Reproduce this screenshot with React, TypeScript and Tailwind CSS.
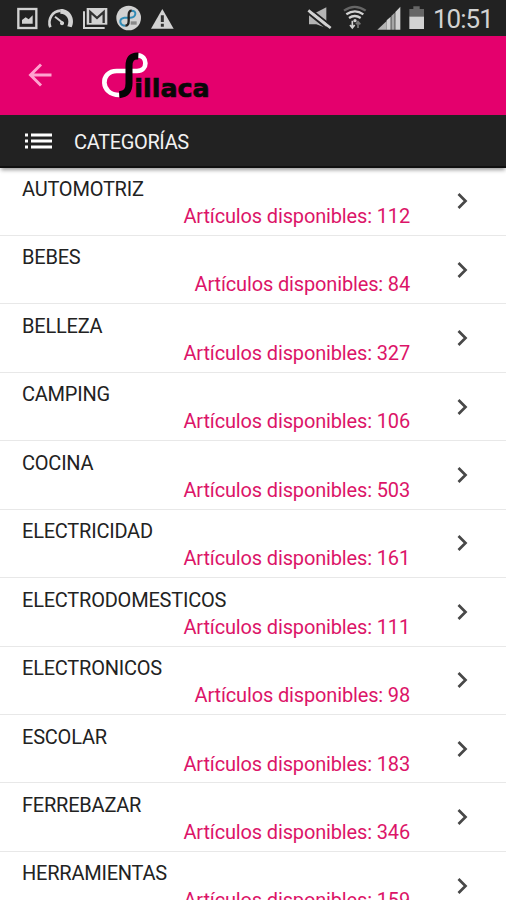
import React from 'react';

interface Category {
  name: string;
  count: number;
}

const categories: Category[] = [
  { name: 'AUTOMOTRIZ', count: 112 },
  { name: 'BEBES', count: 84 },
  { name: 'BELLEZA', count: 327 },
  { name: 'CAMPING', count: 106 },
  { name: 'COCINA', count: 503 },
  { name: 'ELECTRICIDAD', count: 161 },
  { name: 'ELECTRODOMESTICOS', count: 111 },
  { name: 'ELECTRONICOS', count: 98 },
  { name: 'ESCOLAR', count: 183 },
  { name: 'FERREBAZAR', count: 346 },
  { name: 'HERRAMIENTAS', count: 159 },
];

const StatusBar: React.FC = () => (
  <div className="flex h-9 shrink-0 items-center justify-between bg-[#222222] text-[#d2d2d2]">
    {/* Notifications */}
    <svg className="h-9 w-[180px]" viewBox="0 0 540 108" fill="none">
      <rect x="55" y="27" width="54" height="57" stroke="currentColor" strokeWidth="7" />
      <path d="M66 71V60l11-8 9 6 12-12v25z" fill="currentColor" />
      <path d="M151 82c-9-24 6-49 31-50" stroke="currentColor" strokeWidth="8" />
      <path d="M181 27c28-2 47 29 34 55l-13-3c9-21-2-38-21-38z" fill="currentColor" />
      <path d="M165 50l25 20" stroke="currentColor" strokeWidth="6" />
      <circle cx="186" cy="70" r="6" fill="currentColor" />
      <path d="M252 34v50h62" stroke="currentColor" strokeWidth="6" />
      <rect x="260" y="24" width="62" height="50" fill="currentColor" />
      <path d="M271 69V36l20 18 20-18v33" stroke="#303030" strokeWidth="7" />
      <circle cx="386" cy="54" r="37" fill="currentColor" />
      <path d="M394 32q13 0 12 10-1 10-15 11h-18q-13 2-12 13 2 11 15 11" stroke="#318bb5" strokeWidth="6" />
      <path d="M395 32q-9 0-9 14v17q0 14-10 14" stroke="#222222" strokeWidth="7" />
      <path d="M392 69h18" stroke="#888888" strokeWidth="10" />
      <path d="M487 27l34 59h-68z" fill="currentColor" />
      <path d="M487 46v20M487 71v9" stroke="#303030" strokeWidth="9" />
    </svg>
    {/* Phone state */}
    <div className="flex items-center">
      <svg className="h-9 w-[130px]" viewBox="-3 0 390 108" fill="none">
        <path d="M24 38h20l32-16v62L46 73H24z" fill="#b4b4b4" />
        <path d="M24 24l68 54M20 39l66 53" stroke="#222222" strokeWidth="6" />
        <path d="M22 31l67 53" stroke="currentColor" strokeWidth="8" />
        <path d="M129 32q32-23 65 0" stroke="#666666" strokeWidth="7" />
        <path d="M136 43q26-18 51 0M144 54q17-12 35 0" stroke="currentColor" strokeWidth="7" />
        <circle cx="162" cy="62" r="5" fill="currentColor" />
        <path d="M154 62v22M147 75l7 9 7-9" stroke="currentColor" strokeWidth="5" />
        <path d="M171 84V66M165 73l6-8 7 8" stroke="#777777" strokeWidth="5" />
        <path d="M229 89l28-26v26z" fill="#b5b5b5" />
        <path d="M257 89V61l12-11v39zM283 89V36l15-16v69z" fill="currentColor" />
        <path d="M271 89V48l10-10v51z" fill="#a6a6a6" />
        <path d="M325 51V27h12v-8h19v8h13v24z" fill="#666666" />
        <path d="M325 50h44v37h-44z" fill="currentColor" />
      </svg>
      <span className="w-[76px] pt-[2px] pl-[3px] text-[26px] leading-none tracking-[-1px]">10:51</span>
    </div>
  </div>
);

const Logo: React.FC = () => (
  <svg className="h-[70px] w-[130px]" viewBox="0 0 390 210" fill="none">
    <path
      d="M144 46c28 1 32 46-3 47H80c-50 0-51 71 8 72"
      stroke="#ffffff"
      strokeWidth="14"
    />
    <path d="M145 48c-21-1-28 10-28 30v52c0 22-8 32-29 34" stroke="#050505" strokeWidth="21" />
    <text
      x="133"
      y="170"
      fill="#080808"
      stroke="#080808"
      strokeWidth="2"
      fontFamily="DejaVu Sans, sans-serif"
      fontSize="76"
      fontWeight="700"
      textLength="226"
      lengthAdjust="spacingAndGlyphs"
    >
      illaca
    </text>
  </svg>
);

const AppBar: React.FC = () => (
  <header className="flex h-[78.5px] shrink-0 items-center bg-[#e4006d] pb-[1.5px]">
    <svg className="ml-[28px] h-[24px] w-[24px]" viewBox="0 0 24 24" fill="none" stroke="#ffa3d0" strokeWidth="2.9">
      <path d="M23.500 12H3M13 1.5L2.500 12 13 22.500" />
    </svg>
    <div className="ml-[38px]">
      <Logo />
    </div>
  </header>
);

const SectionTitle: React.FC = () => (
  <div className="relative z-10 flex h-[53.5px] shrink-0 items-center border-b-2 border-[#101010] bg-[#222222] pt-[2px] shadow-[0_3px_4px_-1px_rgba(0,0,0,0.4)]">
    <svg className="ml-[25px] h-[16px] w-[27px]" viewBox="0 0 27 16" stroke="#ffffff" strokeWidth="3">
      <path d="M0 2h3M0 8h3M0 14h3M6 2h21M6 8h21M6 14h21" />
    </svg>
    <h1 className="ml-[22px] pt-[2px] text-[20px] tracking-[-0.35px] text-[#f2f2f2]">CATEGORÍAS</h1>
  </div>
);

const CategoryRow: React.FC<{ category: Category }> = ({ category }) => (
  <li className="flex h-[68.45px] shrink-0 items-center border-b border-[#e8e8e8]">
    <div className="flex w-[410px] flex-col self-start pt-[8.5px] pl-[22px] text-[20px] leading-[27px]">
      <span className="tracking-[-0.22px] text-[#222222]">{category.name}</span>
      <span className="self-end tracking-[-0.15px] text-[#dc1468]">Artículos disponibles: {category.count}</span>
    </div>
    <svg className="ml-[47px] h-[18px] w-[12px]" viewBox="0 0 12 18" fill="none" stroke="#484848" strokeWidth="2.700">
      <path d="M1.500 2l7 7-7 7" />
    </svg>
  </li>
);

const App: React.FC = () => {
  return (
    <div className="flex h-[900px] w-full flex-col overflow-hidden bg-white font-[Roboto,sans-serif]">
      <StatusBar />
      <AppBar />
      <SectionTitle />
      <ul className="-mt-[0.5px] flex flex-col">
        {categories.map((category) => (
          <CategoryRow key={category.name} category={category} />
        ))}
      </ul>
    </div>
  );
};

export default App;
